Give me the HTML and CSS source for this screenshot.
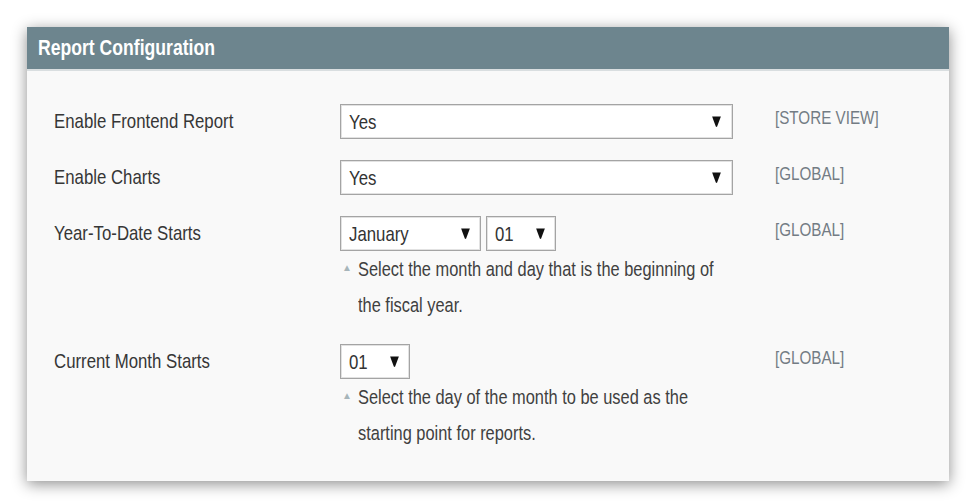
FILE: index.html
```html
<!DOCTYPE html>
<html lang="en">
<head>
<meta charset="utf-8">
<title>Report Configuration</title>
<link rel="stylesheet" href="styles.css">
</head>
<body>
<section class="panel">
  <h2 class="panel-head"><span class="nx">Report Configuration</span></h2>
  <div class="panel-body">
    <div class="row">
      <div class="label"><span class="nx">Enable Frontend Report</span></div>
      <div class="control">
        <div class="select select-wide"><span class="value nx">Yes</span><svg class="arrow" viewBox="0 0 8 10"><path d="M0 0.5 H8 L4.6 9.6 Q4 10.2 3.4 9.6 Z"/></svg></div>
      </div>
      <div class="scope"><span class="nx">[STORE VIEW]</span></div>
    </div>
    <div class="row">
      <div class="label"><span class="nx">Enable Charts</span></div>
      <div class="control">
        <div class="select select-wide"><span class="value nx">Yes</span><svg class="arrow" viewBox="0 0 8 10"><path d="M0 0.5 H8 L4.6 9.6 Q4 10.2 3.4 9.6 Z"/></svg></div>
      </div>
      <div class="scope"><span class="nx">[GLOBAL]</span></div>
    </div>
    <div class="row">
      <div class="label"><span class="nx">Year-To-Date Starts</span></div>
      <div class="control">
        <div class="select-group">
          <div class="select select-month"><span class="value nx">January</span><svg class="arrow" viewBox="0 0 8 10"><path d="M0 0.5 H8 L4.6 9.6 Q4 10.2 3.4 9.6 Z"/></svg></div>
          <div class="select select-day"><span class="value nx">01</span><svg class="arrow" viewBox="0 0 8 10"><path d="M0 0.5 H8 L4.6 9.6 Q4 10.2 3.4 9.6 Z"/></svg></div>
        </div>
        <div class="hint"><span class="hint-mark">&#9650;</span><span class="hint-text nx">Select the month and day that is the beginning of the fiscal year.</span></div>
      </div>
      <div class="scope"><span class="nx">[GLOBAL]</span></div>
    </div>
    <div class="row">
      <div class="label"><span class="nx">Current Month Starts</span></div>
      <div class="control">
        <div class="select select-day"><span class="value nx">01</span><svg class="arrow" viewBox="0 0 8 10"><path d="M0 0.5 H8 L4.6 9.6 Q4 10.2 3.4 9.6 Z"/></svg></div>
        <div class="hint"><span class="hint-mark">&#9650;</span><span class="hint-text nx">Select the day of the month to be used as the starting point for reports.</span></div>
      </div>
      <div class="scope"><span class="nx">[GLOBAL]</span></div>
    </div>
  </div>
</section>
</body>
</html>
```
FILE: styles.css
```css
html, body {
  margin: 0;
  padding: 0;
  background: #ffffff;
}
body {
  padding: 27px 25px 25px 27px;
  font-family: "Liberation Sans", Arial, sans-serif;
  color: #333;
}
/* narrow (condensed) text rendering */
.nx {
  display: inline-block;
  transform: scaleX(0.8);
  transform-origin: 0 50%;
  white-space: nowrap;
}
.panel {
  width: 922px;
  background: #f9f9f9;
  box-shadow: 0 3px 14px rgba(0, 0, 0, 0.45);
}
.panel-head {
  margin: 0;
  height: 42px;
  padding: 0 0 0 11px;
  background: #6d858e;
  border-bottom: 2px solid #d9dee0;
  color: #fff;
  font-size: 22px;
  font-weight: bold;
  line-height: 41px;
}
.panel-body {
  padding: 33px 0 30px 27px;
  display: flex;
  flex-direction: column;
  gap: 21px;
}
.row {
  display: grid;
  grid-template-columns: 286px 393px 1fr;
  align-items: start;
}
.label {
  font-size: 21px;
  line-height: 34px;
  color: #363636;
}
.scope {
  padding-left: 42px;
  font-size: 19px;
  line-height: 28px;
  color: #737c84;
}
.select {
  box-sizing: border-box;
  height: 35px;
  display: flex;
  align-items: center;
  justify-content: space-between;
  padding: 0 11px 0 8px;
  background: #fff;
  border: 1px solid #a4a4a4;
  box-shadow: inset 0 0 0 1px #e2e2e2;
  font-size: 21px;
  color: #333;
  overflow: hidden;
}
.value {
  flex: none;
}
.select-wide { width: 393px; }
.select-month { width: 141px; padding-right: 10px; }
.select-day { width: 70px; padding-right: 10px; }
.select-group {
  display: flex;
  gap: 5px;
}
.arrow {
  width: 9px;
  height: 11px;
  fill: #111;
  flex: none;
}
.hint {
  position: relative;
  padding-left: 18px;
  font-size: 20.5px;
  line-height: 36px;
  color: #404040;
}
.hint-text {
  width: 470px;
  white-space: normal;
}
.hint-mark {
  position: absolute;
  left: 2px;
  top: -1px;
  font-size: 10px;
  color: #a7b5ba;
}
```
